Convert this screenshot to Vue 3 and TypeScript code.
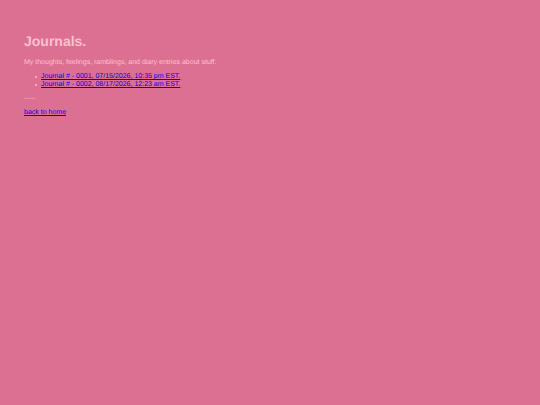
<script setup lang="ts">
interface JournalEntry {
  id: string
  title: string
}

const entries: JournalEntry[] = [
  { id: '0001', title: 'Journal # - 0001, 07/15/2026, 10:35 pm EST.' },
  { id: '0002', title: 'Journal # - 0002, 08/17/2026, 12:23 am EST.' },
]
</script>

<template>
  <main class="page">
    <h1 class="title">Journals.</h1>
    <p class="text">My thoughts, feelings, ramblings, and diary entries about stuff.</p>
    <ul class="entries">
      <li v-for="entry in entries" :key="entry.id" class="entry">
        <a :href="`#journal-${entry.id}`">{{ entry.title }}</a>
      </li>
    </ul>
    <p class="text">-----</p>
    <p class="text"><a href="#home">back to home</a></p>
  </main>
</template>

<style>
body {
  background: #db7093;
}
</style>

<style scoped>
.page {
  padding: 33px 24px;
  color: pink;
  font-family: "Liberation Sans", Arial, sans-serif;
  font-size: 7px;
  line-height: 8px;
  text-rendering: geometricPrecision;
}

.title {
  margin: 0 0 10px;
  font-size: 14px;
  line-height: 16px;
}

.text {
  margin: 0 0 6px;
}

.entries {
  margin: 0 0 6px;
  padding-left: 11px;
  list-style: none;
}

.entry {
  display: flex;
  align-items: center;
  gap: 4px;
}

.entry::before {
  content: "";
  width: 2px;
  height: 2px;
  border-radius: 50%;
  background: currentColor;
}

a {
  color: #0000ee;
}
</style>
